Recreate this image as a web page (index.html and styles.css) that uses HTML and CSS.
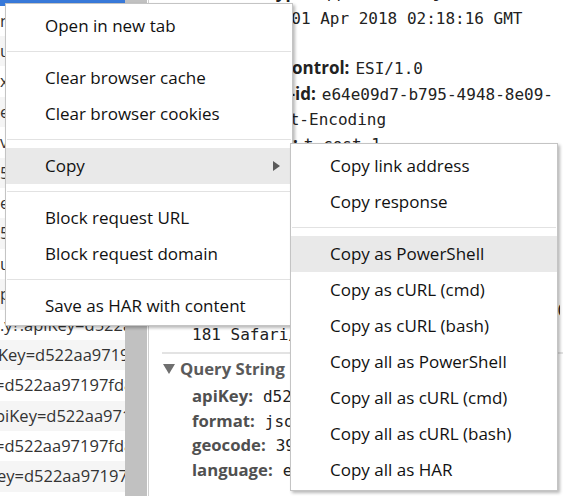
FILE: index.html
```html
<!DOCTYPE html>
<html>
<head>
<meta charset="utf-8">
<link rel="stylesheet" href="styles.css">
</head>
<body>
<div class="app">
  <div class="list">
    <div class="row sel">forecast/daily/5day.json?apiKey=d522aa97197fd864d36b418f39ebb323</div>
    <div class="row">ny?apiKey=d522aa97197fd864d36b418f39ebb323</div>
    <div class="row">ul?apiKey=d522aa97197fd864d36b418f39ebb323</div>
    <div class="row">x?apiKey=d522aa97197fd864d36b418f39ebb323</div>
    <div class="row">e?apiKey=d522aa97197fd864d36b418f39ebb323</div>
    <div class="row">v?apiKey=d522aa97197fd864d36b418f39ebb323</div>
    <div class="row">5?apiKey=d522aa97197fd864d36b418f39ebb323</div>
    <div class="row">e?apiKey=d522aa97197fd864d36b418f39ebb323</div>
    <div class="row">5?apiKey=d522aa97197fd864d36b418f39ebb323</div>
    <div class="row">ul?apiKey=d522aa97197fd864d36b418f39ebb323</div>
    <div class="row">p?apiKey=d522aa97197fd864d36b418f39ebb323</div>
    <div class="row">.y?.apiKey=d522aa97197fd864d36b418f39ebb323</div>
    <div class="row cut-k">Key=d522aa97197fd864d36b418f39ebb323</div>
    <div class="row cut-eq">=d522aa97197fd864d36b418f39ebb323</div>
    <div class="row cut-p">piKey=d522aa97197fd864d36b418f39ebb323</div>
    <div class="row cut-eq">=d522aa97197fd864d36b418f39ebb323</div>
    <div class="row cut-e">ey=d522aa97197fd864d36b418f39ebb323</div>
  </div>
  <div class="scroll"><div class="thumb"></div></div>
  <div class="detail">
    <div class="hdrs resp">
      <div class="hl"><b class="k">Content-Type:</b><span class="v">application/json;charset=UTF-8</span></div>
      <div class="hl"><b class="k">Date:</b><span class="v">Sun, 01 Apr 2018 02:18:16 GMT</span></div>
      <div class="hl"><b class="k">Expires:</b><span class="v">-1</span></div>
      <div class="hl"><b class="k">Surrogate-Control:</b><span class="v">ESI/1.0</span></div>
      <div class="hl"><b class="k">X-Response-id:</b><span class="v">e64e09d7-b795-4948-8e09-</span></div>
      <div class="hl"><b class="k">Vary:</b><span class="v">Accept-Encoding</span></div>
      <div class="hl"><b class="k">X-Served-By:</b><span class="v">t cost 1</span></div>
    </div>
    <div class="hdrs req">
      <div class="hl"><b class="k">Accept:</b><span class="v">*/*</span></div>
      <div class="hl"><b class="k">Accept-Encoding:</b><span class="v">gzip, deflate, br</span></div>
      <div class="hl"><b class="k">Accept-Language:</b><span class="v">en-US,en;q=0.9</span></div>
      <div class="hl"><b class="k">Connection:</b><span class="v">keep-alive</span></div>
      <div class="hl"><b class="k">Host:</b><span class="v">api.weather.com</span></div>
      <div class="hl"><b class="k">User-Agent:</b><span class="v">Mozilla/5.0 (Windows NT 10.0;</span></div>
      <div class="hl"><span class="v">181 Safari/537.36</span></div>
    </div>
    <div class="qs">
      <div class="qs-title">
        <svg class="tri" width="12" height="10" viewBox="0 0 12 10"><polygon points="0,0 12,0 6,10" fill="#6f6f6f"/></svg>
        <span>Query String</span>
      </div>
      <div class="param"><b class="pk">apiKey:</b><span class="v">d522aa97197fd864d36b418f39eb</span></div>
      <div class="param"><b class="pk">format:</b><span class="v">json</span></div>
      <div class="param"><b class="pk">geocode:</b><span class="v">39.95,-75.16</span></div>
      <div class="param"><b class="pk">language:</b><span class="v">en-US</span></div>
    </div>
  </div>

  <div class="menu main">
    <div class="item">Open in new tab</div>
    <div class="sep"></div>
    <div class="item">Clear browser cache</div>
    <div class="item">Clear browser cookies</div>
    <div class="sep"></div>
    <div class="item hot">Copy
      <svg class="arrow" width="7" height="10" viewBox="0 0 7 10"><polygon points="0,0 7,5 0,10" fill="#5a5a5a"/></svg>
    </div>
    <div class="sep"></div>
    <div class="item">Block request URL</div>
    <div class="item">Block request domain</div>
    <div class="sep"></div>
    <div class="item">Save as HAR with content</div>
  </div>

  <div class="menu sub">
    <div class="item">Copy link address</div>
    <div class="item">Copy response</div>
    <div class="sep"></div>
    <div class="item hot">Copy as PowerShell</div>
    <div class="item">Copy as cURL (cmd)</div>
    <div class="item">Copy as cURL (bash)</div>
    <div class="item">Copy all as PowerShell</div>
    <div class="item">Copy all as cURL (cmd)</div>
    <div class="item">Copy all as cURL (bash)</div>
    <div class="item">Copy all as HAR</div>
  </div>
</div>
</body>
</html>
```
FILE: styles.css
```css
html, body {
  margin: 0;
  padding: 0;
  background: #fff;
  overflow: hidden;
}

.app {
  position: relative;
  display: flex;
  width: 563px;
  height: 496px;
  overflow: hidden;
  font-family: "Open Sans", sans-serif;
}

/* request list */
.list {
  flex: none;
  width: 125px;
  margin-top: -24.8px;
  overflow: hidden;
}

.row {
  height: 30.4px;
  line-height: 30.4px;
  font-size: 16.5px;
  color: #333;
  white-space: nowrap;
  overflow: hidden;
}

.row:nth-child(odd) {
  background: #f5f5f5;
}

.row.sel {
  background: #3879d9;
  color: #fff;
}

.row.cut-k { text-indent: -2px; }
.row.cut-eq { text-indent: -5px; }
.row.cut-p { text-indent: -5px; }
.row.cut-e { text-indent: -3px; }

.scroll {
  flex: none;
  width: 23px;
  border-right: 1px solid #d0d0d0;
  display: flex;
}

.thumb {
  width: 22px;
  background: #c1c1c1;
}

/* detail panel */
.detail {
  flex: 1;
  min-width: 0;
  overflow: hidden;
  display: flex;
  flex-direction: column;
}

.hdrs {
  padding-left: 43px;
}

.hdrs.resp {
  margin-top: -20.65px;
}

.hdrs.req {
  margin-top: 14px;
}

.hl {
  display: flex;
  align-items: baseline;
  height: 25.3px;
  line-height: 25.3px;
  margin-right: 3px;
  white-space: nowrap;
  overflow: hidden;
}

.k {
  font-size: 17px;
  font-weight: 700;
  color: #222;
  margin-right: 6px;
}

.v {
  font-family: "DejaVu Sans Mono", monospace;
  font-size: 16px;
  color: #222;
}

.qs {
  margin-top: 4.35px;
  margin-left: 13px;
  border-top: 2px solid #e3e3e3;
}

.qs-title {
  height: 30px;
  display: flex;
  align-items: center;
  gap: 5px;
  padding-left: 1px;
  font-size: 16.7px;
  font-weight: 700;
  color: #5a5a5a;
  white-space: nowrap;
}

.tri {
  flex: none;
}

.param {
  display: flex;
  align-items: baseline;
  height: 24.7px;
  line-height: 24.7px;
  padding-left: 30px;
  margin-right: 3px;
  white-space: nowrap;
  overflow: hidden;
}

.pk {
  font-size: 16.7px;
  font-weight: 700;
  color: #505050;
  margin-right: 10px;
}

/* context menus */
.menu {
  position: absolute;
  background: #fff;
  border: 1px solid #c4c4c4;
  box-shadow: 2px 2px 3px rgba(0, 0, 0, 0.28);
  padding: 4px 0 1px;
  font-size: 17px;
  color: #111;
  white-space: nowrap;
}

.menu.main {
  left: 5px;
  top: 3px;
  width: 286px;
}

.menu.sub {
  left: 290px;
  top: 143px;
  width: 266px;
  padding-bottom: 2px;
}

.item {
  position: relative;
  height: 36px;
  line-height: 36px;
  padding-left: 39px;
}

.item.hot {
  background: #e9e9e9;
}

.sep {
  height: 16px;
  padding: 7px 1px 0;
  box-sizing: border-box;
}

.sep::before {
  content: "";
  display: block;
  height: 1px;
  background: #e2e2e2;
}

.arrow {
  position: absolute;
  right: 12px;
  top: 13px;
}
```
